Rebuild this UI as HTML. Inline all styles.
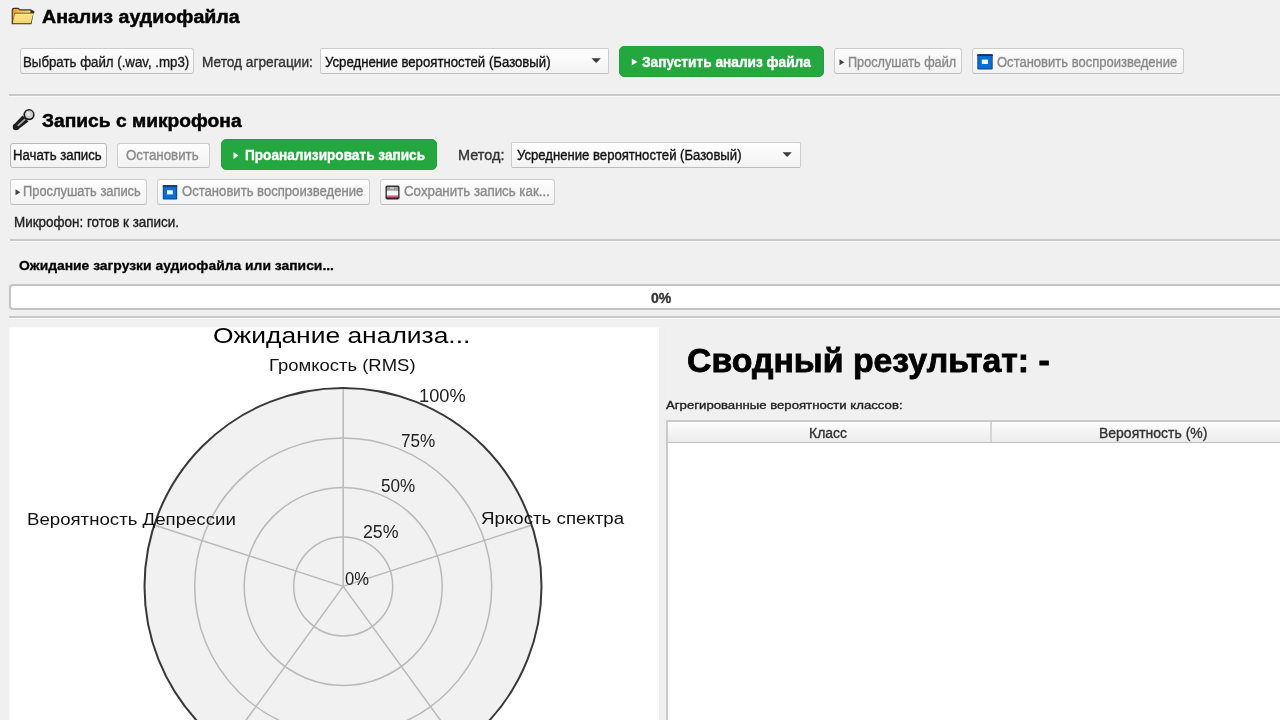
<!DOCTYPE html>
<html><head><meta charset="utf-8"><title>Audio analysis</title>
<style>
html,body{margin:0;padding:0;}
body{width:1280px;height:720px;overflow:hidden;background:#f0f0f0;position:relative;font-family:"Liberation Sans", sans-serif;}
.tx{position:absolute;white-space:nowrap;line-height:1;transform-origin:0 0;-webkit-text-stroke:0.35px currentColor;}
.ab{position:absolute;box-sizing:border-box;}
#root{position:absolute;left:0;top:0;width:1280px;height:720px;background:#f0f0f0;overflow:hidden;filter:blur(0.65px);}
.btn{position:absolute;box-sizing:border-box;border:1px solid #cdcdcd;border-bottom-color:#bdbdbd;border-radius:3px;background:linear-gradient(#fdfdfd,#f2f2f2);}
.green{position:absolute;box-sizing:border-box;background:#25a740;border-radius:5px;border:1px solid #21a03c;}
.sep{position:absolute;left:9px;right:0;height:2px;background:#c9c9c9;border-bottom:1px solid #fafafa;}
</style></head><body>
<div id="root">
<!-- folder icon -->
<svg class="ab" style="left:8px;top:4px" width="30" height="24" viewBox="0 0 30 24">
  <defs><linearGradient id="fg" x1="0" y1="0" x2="0" y2="1"><stop offset="0" stop-color="#fde58f"/><stop offset="1" stop-color="#f5d46c"/></linearGradient>
  <linearGradient id="fb" x1="0" y1="0" x2="1" y2="0.3"><stop offset="0" stop-color="#f0901c"/><stop offset="0.45" stop-color="#f7c956"/><stop offset="1" stop-color="#f9dc7a"/></linearGradient></defs>
  <path d="M3.7 19.9 L3.7 6 Q3.7 3.8 5.9 3.8 L10.4 3.8 L12 5.2 L22.6 5.2 L26.4 7.3 L26.4 9 L25.6 9 L23.5 20.3 L3.7 20.3 Z" fill="#3d3018"/>
  <path d="M4.8 19 L4.8 6.4 Q4.8 5 6.1 5 L10 5 L11.6 6.4 L22.4 6.4 L22.4 8.8 L6.4 8.8 Z" fill="url(#fb)"/>
  <path d="M6.8 9.4 L25.3 9.4 L22.8 19.2 L4.8 19.2 Z" fill="url(#fg)"/>
</svg>
<!-- row 1 -->
<div class="btn" style="left:20px;top:48px;width:174px;height:26px;"></div>
<div class="btn" style="left:320px;top:48px;width:289px;height:26px;border-radius:2px;background:linear-gradient(#ffffff,#f3f3f3)"></div>
<svg class="ab" style="left:590.5px;top:57.8px" width="12" height="7"><path d="M0.5 0.3 L9.8 0.3 L5.15 5 Z" fill="#3a3a3a"/></svg>
<div class="green" style="left:618.7px;top:45.6px;width:205.6px;height:31.2px;"></div>
<svg class="ab" style="left:631px;top:58.3px" width="8" height="9"><path d="M0.8 0.5 L6.3 4 L0.8 7.5 Z" fill="#fff"/></svg>
<div class="btn" style="left:833.5px;top:48px;width:128px;height:26px;"></div>
<svg class="ab" style="left:839px;top:59px" width="7" height="7"><path d="M0.5 0.3 L5.3 3.3 L0.5 6.3 Z" fill="#444"/></svg>
<div class="btn" style="left:972px;top:48px;width:212px;height:26px;"></div>
<svg class="ab" style="left:977px;top:54px" width="16" height="16" viewBox="0 0 16 16">
  <rect x="0.3" y="0.3" width="15.4" height="15.2" rx="1.2" fill="#0b4788"/>
  <rect x="0.3" y="0.3" width="15.4" height="1.6" fill="#0a2f5c"/>
  <rect x="1.3" y="1.9" width="13.4" height="12.5" fill="#0a6fd4"/>
  <rect x="4.8" y="5.6" width="6.2" height="4.4" fill="#f4f8ff"/>
</svg>
<div class="sep" style="top:94px;"></div>
<!-- mic icon -->
<svg class="ab" style="left:8px;top:105px" width="30" height="28" viewBox="0 0 30 28">
  <path d="M14.5 10.5 L20.5 16.5 L10.3 24.3 L5.7 19.7 Z" fill="#1c1c1c"/>
  <circle cx="8" cy="22" r="3.25" fill="#1c1c1c"/>
  <line x1="16.6" y1="14.6" x2="10.2" y2="20.4" stroke="#a5a5a5" stroke-width="1.8" stroke-linecap="round"/>
  <circle cx="21" cy="9.7" r="5.6" fill="#1c1c1c"/>
  <circle cx="21.1" cy="9.6" r="4" fill="#cdcdcd"/>
  <circle cx="20.5" cy="9" r="2" fill="#e4e4e4"/>
</svg>
<!-- row 2 -->
<div class="btn" style="left:9.5px;top:142.5px;width:97px;height:25px;border-color:#b9b9b9"></div>
<div class="btn" style="left:116.5px;top:142.5px;width:93px;height:25px;"></div>
<div class="green" style="left:220.6px;top:139px;width:216px;height:31.2px;"></div>
<svg class="ab" style="left:232.5px;top:151.7px" width="8" height="9"><path d="M0.5 0.3 L5.5 3.6 L0.5 6.9 Z" fill="#fff"/></svg>
<div class="btn" style="left:511px;top:141.5px;width:290px;height:26px;border-radius:2px;background:linear-gradient(#ffffff,#f3f3f3)"></div>
<svg class="ab" style="left:781.8px;top:151.8px" width="12" height="7"><path d="M0.5 0.3 L9.8 0.3 L5.15 5 Z" fill="#3a3a3a"/></svg>
<!-- row 3 -->
<div class="btn" style="left:10px;top:178.5px;width:136.5px;height:26px;"></div>
<svg class="ab" style="left:15px;top:189px" width="7" height="7"><path d="M0.5 0.3 L5.3 3.3 L0.5 6.3 Z" fill="#444"/></svg>
<div class="btn" style="left:157px;top:178.5px;width:212.5px;height:26px;"></div>
<svg class="ab" style="left:162px;top:184.5px" width="16" height="15" viewBox="0 0 16 16">
  <rect x="0.3" y="0.3" width="15.4" height="15.2" rx="1.2" fill="#0b4788"/>
  <rect x="0.3" y="0.3" width="15.4" height="1.6" fill="#0a2f5c"/>
  <rect x="1.3" y="1.9" width="13.4" height="12.5" fill="#0a6fd4"/>
  <rect x="4.8" y="5.6" width="6.2" height="4.4" fill="#f4f8ff"/>
</svg>
<div class="btn" style="left:379.5px;top:178.5px;width:175px;height:26px;"></div>
<svg class="ab" style="left:385px;top:184.5px" width="15" height="15" viewBox="0 0 15 15">
  <defs><linearGradient id="sv" x1="0" y1="0" x2="0" y2="1"><stop offset="0" stop-color="#ec8fb0"/><stop offset="1" stop-color="#7c1236"/></linearGradient></defs>
  <rect x="0.5" y="0.5" width="14" height="14" rx="1.8" fill="#262626"/>
  <rect x="1.8" y="1.8" width="11.4" height="3.6" fill="#9a9a9a"/>
  <rect x="5" y="2.3" width="4" height="1.6" fill="#d0d0d0"/>
  <rect x="1.8" y="5.4" width="11.4" height="5.3" fill="#f6f6f6"/>
  <rect x="1.8" y="10.7" width="11.4" height="2.5" fill="url(#sv)"/>
</svg>
<div class="sep" style="top:238.5px;left:10px"></div>
<!-- progress -->
<div class="ab" style="left:9.2px;top:284.3px;width:1290px;height:25.5px;border:2px solid #c3c3c3;border-radius:4px;background:#fff"></div>
<div class="sep" style="top:315.5px;left:9px"></div>
<!-- chart -->
<svg class="ab" style="left:0;top:0" width="1280" height="720" viewBox="0 0 1280 720">
  <rect x="9.4" y="327.5" width="649.6" height="393" fill="#fff"/>
  <circle cx="343" cy="586.4" r="198.5" fill="#f1f1f1"/>
  <g stroke="#b9b9b9" stroke-width="1.5" fill="none">
    <circle cx="343.2" cy="586.4" r="49.5"/>
    <circle cx="343.2" cy="586.4" r="99"/>
    <circle cx="343.2" cy="586.4" r="148.5"/>
    <line x1="343.2" y1="586.4" x2="343.2" y2="388.4"/>
    <line x1="343.2" y1="586.4" x2="531.5" y2="525.2"/>
    <line x1="343.2" y1="586.4" x2="154.9" y2="525.2"/>
    <line x1="343.2" y1="586.4" x2="226.8" y2="746.6"/>
    <line x1="343.2" y1="586.4" x2="459.6" y2="746.6"/>
  </g>
  <circle cx="343" cy="586.4" r="198.5" fill="none" stroke="#383838" stroke-width="2"/>
  <!-- right panel strip -->
  <rect x="659" y="327.5" width="7" height="393" fill="#efefef"/>
</svg>
<!-- table -->
<div class="ab" style="left:666px;top:420px;width:660px;height:320px;background:#fff;border:2px solid #cacaca;border-right:none;border-bottom:none"></div>
<div class="ab" style="left:668px;top:421.5px;width:660px;height:21.5px;background:linear-gradient(#fdfdfd,#ebebeb);border-bottom:1.8px solid #c0c0c0"></div>
<div class="ab" style="left:990px;top:421.5px;width:2px;height:20px;background:#d6d6d6"></div>

<div class="tx" style="left:42.00px;top:7.03px;font-size:19.26px;font-weight:700;color:#000;transform:scaleX(1.0176);-webkit-text-stroke:0.5px #000;">Анализ аудиофайла</div>
<div class="tx" style="left:23.05px;top:55.64px;font-size:13.95px;font-weight:400;color:#1a1a1a;transform:scaleX(0.9520);">Выбрать файл (.wav, .mp3)</div>
<div class="tx" style="left:202.02px;top:55.64px;font-size:13.95px;font-weight:400;color:#333;transform:scaleX(0.9806);">Метод агрегации:</div>
<div class="tx" style="left:325.00px;top:55.64px;font-size:13.95px;font-weight:400;color:#111;transform:scaleX(0.9460);">Усреднение вероятностей (Базовый)</div>
<div class="tx" style="left:642.20px;top:55.27px;font-size:14.39px;font-weight:700;color:#fff;transform:scaleX(0.9524);">Запустить анализ файла</div>
<div class="tx" style="left:847.79px;top:55.64px;font-size:13.95px;font-weight:400;color:#8a8a8a;transform:scaleX(0.9097);">Прослушать файл</div>
<div class="tx" style="left:997.30px;top:55.64px;font-size:13.95px;font-weight:400;color:#8a8a8a;transform:scaleX(0.9338);">Остановить воспроизведение</div>
<div class="tx" style="left:41.70px;top:111.61px;font-size:18.58px;font-weight:700;color:#000;transform:scaleX(1.0337);-webkit-text-stroke:0.5px #000;">Запись с микрофона</div>
<div class="tx" style="left:12.55px;top:148.84px;font-size:13.95px;font-weight:400;color:#111;transform:scaleX(0.9493);">Начать запись</div>
<div class="tx" style="left:126.00px;top:148.84px;font-size:13.95px;font-weight:400;color:#8a8a8a;transform:scaleX(0.9550);">Остановить</div>
<div class="tx" style="left:244.80px;top:148.35px;font-size:14.53px;font-weight:700;color:#fff;transform:scaleX(0.9389);">Проанализировать запись</div>
<div class="tx" style="left:458.26px;top:148.84px;font-size:13.95px;font-weight:400;color:#333;transform:scaleX(1.0383);">Метод:</div>
<div class="tx" style="left:516.60px;top:148.84px;font-size:13.95px;font-weight:400;color:#111;transform:scaleX(0.9414);">Усреднение вероятностей (Базовый)</div>
<div class="tx" style="left:23.08px;top:185.34px;font-size:13.95px;font-weight:400;color:#8a8a8a;transform:scaleX(0.9241);">Прослушать запись</div>
<div class="tx" style="left:181.80px;top:185.34px;font-size:13.95px;font-weight:400;color:#8a8a8a;transform:scaleX(0.9395);">Остановить воспроизведение</div>
<div class="tx" style="left:403.60px;top:185.34px;font-size:13.95px;font-weight:400;color:#8a8a8a;transform:scaleX(0.9558);">Сохранить запись как...</div>
<div class="tx" style="left:13.64px;top:215.74px;font-size:13.95px;font-weight:400;color:#222;transform:scaleX(0.9638);">Микрофон: готов к записи.</div>
<div class="tx" style="left:18.75px;top:258.84px;font-size:13.25px;font-weight:700;color:#000;transform:scaleX(1.0471);-webkit-text-stroke:0.3px #000;">Ожидание загрузки аудиофайла или записи...</div>
<div class="tx" style="left:651.40px;top:289.60px;font-size:15.41px;font-weight:700;color:#333;transform:scaleX(0.9128);">0%</div>
<div class="tx" style="left:213.01px;top:325.40px;font-size:22.24px;font-weight:400;color:#000;transform:scaleX(1.1879);-webkit-text-stroke:0;">Ожидание анализа...</div>
<div class="tx" style="left:269.22px;top:357.75px;font-size:15.7px;font-weight:400;color:#111;transform:scaleX(1.1772);-webkit-text-stroke:0;">Громкость (RMS)</div>
<div class="tx" style="left:26.96px;top:510.64px;font-size:16.42px;font-weight:400;color:#111;transform:scaleX(1.1360);-webkit-text-stroke:0;">Вероятность Депрессии</div>
<div class="tx" style="left:481.10px;top:509.93px;font-size:17.08px;font-weight:400;color:#111;transform:scaleX(1.0947);-webkit-text-stroke:0;">Яркость спектра</div>
<div class="tx" style="left:418.96px;top:388.38px;font-size:17.44px;font-weight:400;color:#222;transform:scaleX(1.0442);-webkit-text-stroke:0;">100%</div>
<div class="tx" style="left:400.75px;top:432.88px;font-size:17.44px;font-weight:400;color:#222;transform:scaleX(0.9812);-webkit-text-stroke:0;">75%</div>
<div class="tx" style="left:381.25px;top:478.38px;font-size:17.44px;font-weight:400;color:#222;transform:scaleX(0.9812);-webkit-text-stroke:0;">50%</div>
<div class="tx" style="left:362.50px;top:524.38px;font-size:17.44px;font-weight:400;color:#222;transform:scaleX(1.0176);-webkit-text-stroke:0;">25%</div>
<div class="tx" style="left:344.50px;top:570.88px;font-size:17.44px;font-weight:400;color:#222;transform:scaleX(0.9515);-webkit-text-stroke:0;">0%</div>
<div class="tx" style="left:687.09px;top:344.36px;font-size:33.34px;font-weight:700;color:#000;transform:scaleX(1.0144);-webkit-text-stroke:0.8px #000;">Сводный результат: -</div>
<div class="tx" style="left:666.40px;top:400.39px;font-size:11.3px;font-weight:400;color:#222;transform:scaleX(1.1654);">Агрегированные вероятности классов:</div>
<div class="tx" style="left:809.00px;top:427.04px;font-size:13.95px;font-weight:400;color:#333;transform:scaleX(1.0008);">Класс</div>
<div class="tx" style="left:1098.50px;top:427.04px;font-size:13.95px;font-weight:400;color:#333;transform:scaleX(1.0028);">Вероятность (%)</div>
</div>
</body></html>
